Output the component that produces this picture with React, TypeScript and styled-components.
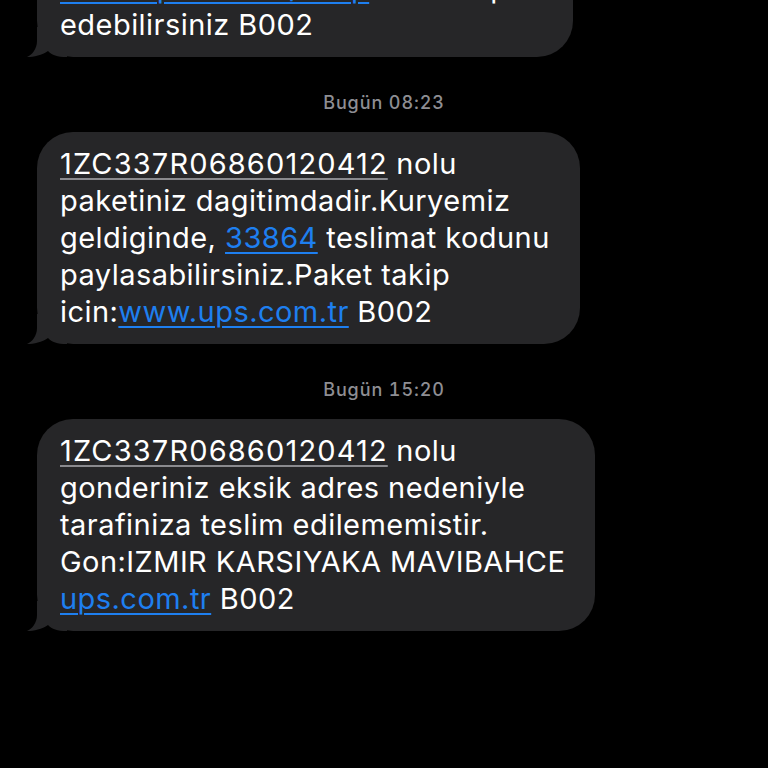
import React from "react";
import styled, { createGlobalStyle } from "styled-components";

const GlobalStyle = createGlobalStyle`
	html, body {
		margin: 0;
		padding: 0;
		background: #000;
	}
`;

const Screen = styled.div`
	width: 768px;
	height: 768px;
	overflow: hidden;
	background: #000;
	display: flex;
	flex-direction: column;
	font-family: Inter, "Noto Sans", sans-serif;
`;

const Row = styled.div<{ $offset?: number }>`
	display: flex;
	padding-left: 37px;
	margin-top: ${(p) => p.$offset ?? 0}px;
`;

const Bubble = styled.div`
	position: relative;
	background: #262628;
	color: #fff;
	border-radius: 36px;
	padding: 13px 30px 14px 23px;
	font-size: 29px;
	line-height: 37px;
	letter-spacing: 0.45px;
	white-space: nowrap;
`;

const Text = styled.div`
	position: relative;
	z-index: 1;
`;

const Tail = styled.svg`
	position: absolute;
	left: -10px;
	bottom: 0;
	width: 40px;
	height: 30px;
	z-index: 0;
`;

const Stamp = styled.div`
	text-align: center;
	font-size: 18px;
	line-height: 20px;
	font-weight: 500;
	color: #8e8e93;
	margin: 36px 0 19px;
	letter-spacing: 0.9px;
	font-feature-settings: "tnum";
`;

const Tracking = styled.span`
	letter-spacing: 1.15px;
	text-decoration: underline;
	text-decoration-color: #8a8a8e;
	text-decoration-thickness: 1.5px;
	text-underline-offset: 4px;
`;

const Link = styled.span`
	color: #1e7ff0;
	text-decoration: underline;
	text-decoration-thickness: 1.5px;
	text-underline-offset: 4px;
`;

const BubbleTail = () => (
	<Tail viewBox="0 0 40 30">
		<path
			d="M10 0 L10 14 C10 22 5 28 0 30 C7 30 15 28 21 24 C25 28 30 30 40 30 L40 0 Z"
			fill="#262628"
		/>
	</Tail>
);

const Message = ({ children, offset }: { children: React.ReactNode; offset?: number }) => (
	<Row $offset={offset}>
		<Bubble>
			<BubbleTail />
			<Text>{children}</Text>
		</Bubble>
	</Row>
);

const App = () => (
	<>
		<GlobalStyle />
		<Screen>
			<Message offset={-81}>
				paketiniz teslim edildi. Gonderinizi
				<br />
				<Link>www.ups.com.tr/takip</Link>  den takip
				<br />
				edebilirsiniz B002
			</Message>

			<Stamp>Bugün 08:23</Stamp>

			<Message>
				<Tracking>1ZC337R06860120412</Tracking> nolu
				<br />
				paketiniz dagitimdadir.Kuryemiz
				<br />
				geldiginde, <Link>33864</Link> teslimat kodunu
				<br />
				paylasabilirsiniz.Paket takip
				<br />
				icin:<Link>www.ups.com.tr</Link> B002
			</Message>

			<Stamp>Bugün 15:20</Stamp>

			<Message>
				<Tracking>1ZC337R06860120412</Tracking> nolu
				<br />
				gonderiniz eksik adres nedeniyle
				<br />
				tarafiniza teslim edilememistir.
				<br />
				Gon:IZMIR KARSIYAKA MAVIBAHCE
				<br />
				<Link>ups.com.tr</Link> B002
			</Message>
		</Screen>
	</>
);

export default App;
